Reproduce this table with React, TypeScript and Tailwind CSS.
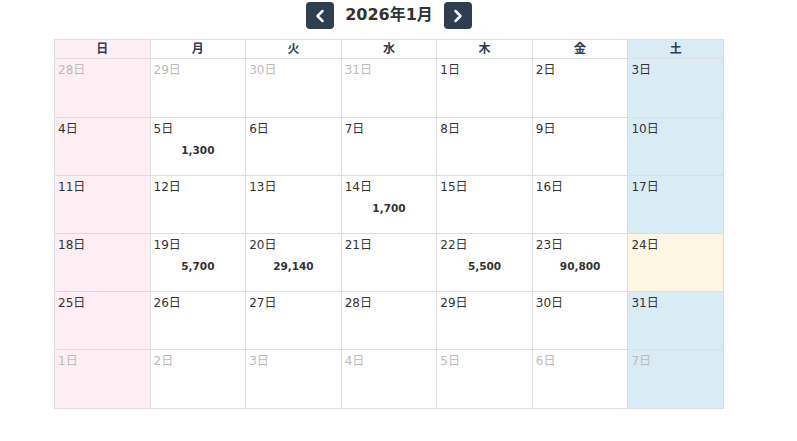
import { ChevronLeft, ChevronRight } from 'lucide-react'

type Day = { label: string; muted?: boolean; amount?: string; today?: boolean }

const weekdays = ['日', '月', '火', '水', '木', '金', '土']

const weeks: Day[][] = [
  [
    { label: '28日', muted: true },
    { label: '29日', muted: true },
    { label: '30日', muted: true },
    { label: '31日', muted: true },
    { label: '1日' },
    { label: '2日' },
    { label: '3日' },
  ],
  [
    { label: '4日' },
    { label: '5日', amount: '1,300' },
    { label: '6日' },
    { label: '7日' },
    { label: '8日' },
    { label: '9日' },
    { label: '10日' },
  ],
  [
    { label: '11日' },
    { label: '12日' },
    { label: '13日' },
    { label: '14日', amount: '1,700' },
    { label: '15日' },
    { label: '16日' },
    { label: '17日' },
  ],
  [
    { label: '18日' },
    { label: '19日', amount: '5,700' },
    { label: '20日', amount: '29,140' },
    { label: '21日' },
    { label: '22日', amount: '5,500' },
    { label: '23日', amount: '90,800' },
    { label: '24日', today: true },
  ],
  [
    { label: '25日' },
    { label: '26日' },
    { label: '27日' },
    { label: '28日' },
    { label: '29日' },
    { label: '30日' },
    { label: '31日' },
  ],
  [
    { label: '1日', muted: true },
    { label: '2日', muted: true },
    { label: '3日', muted: true },
    { label: '4日', muted: true },
    { label: '5日', muted: true },
    { label: '6日', muted: true },
    { label: '7日', muted: true },
  ],
]

function cellBg(col: number, today?: boolean) {
  if (today) return 'bg-[#fdf6e3]'
  if (col === 0) return 'bg-[#ffeef3]'
  if (col === 6) return 'bg-[#d9ecf5]'
  return 'bg-white'
}

export default function App() {
  return (
    <div
      className="h-[441px] w-[797px] bg-white pl-[54px] text-[#333]"
      style={{ fontFamily: '"DejaVu Sans", "Noto Sans CJK JP", sans-serif' }}
    >
      <div className="w-[670px]">
        <div className="flex h-[39px] items-start justify-center gap-[11px] pt-[2px]">
          <button
            type="button"
            className="flex h-[27px] w-[28px] items-center justify-center rounded-[4px] bg-[#2c3e50] text-white"
          >
            <ChevronLeft size={20} strokeWidth={3} />
          </button>
          <h2 className="mt-[3px] text-[16px] font-bold leading-[20px] text-[#333]">2026年1月</h2>
          <button
            type="button"
            className="flex h-[27px] w-[28px] items-center justify-center rounded-[4px] bg-[#2c3e50] text-white"
          >
            <ChevronRight size={20} strokeWidth={3} />
          </button>
        </div>

        <table className="w-full table-fixed border-collapse border border-[#ddd]">
          <thead>
            <tr className="h-[19px]">
              {weekdays.map((w, i) => (
                <th
                  key={w}
                  className={`border border-[#ddd] p-0 text-center text-[12px] font-bold leading-[17px] text-[#2c3e50] ${cellBg(i)}`}
                >
                  {w}
                </th>
              ))}
            </tr>
          </thead>
          <tbody>
            {weeks.map((week, r) => (
              <tr key={r} className={r === 0 || r === weeks.length - 1 ? 'h-[59px]' : 'h-[58px]'}>
                {week.map((d, c) => (
                  <td
                    key={c}
                    className={`border border-[#ddd] px-[3px] pt-[3px] align-top ${cellBg(c, d.today)}`}
                  >
                    <div
                      className={`text-[12px] leading-[16px] ${d.muted ? 'text-[#bbb]' : 'text-[#333]'}`}
                    >
                      {d.label}
                    </div>
                    {d.amount && (
                      <div className="mt-[6px] text-center text-[10.5px] font-bold leading-[14px] text-[#333]">
                        {d.amount}
                      </div>
                    )}
                  </td>
                ))}
              </tr>
            ))}
          </tbody>
        </table>
      </div>
    </div>
  )
}
